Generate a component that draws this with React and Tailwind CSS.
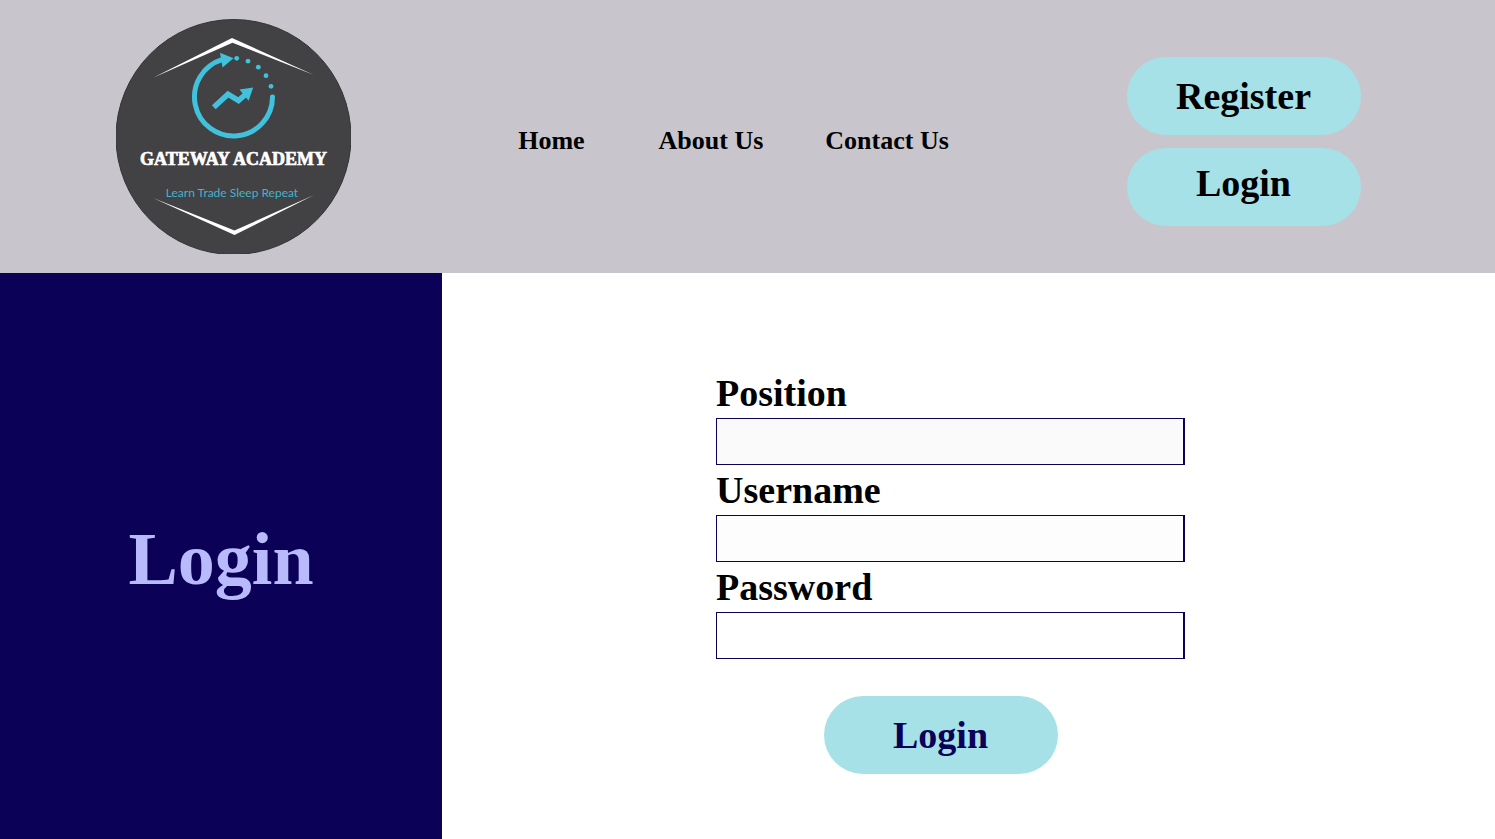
import React from "react";

function Logo() {
  return (
    <svg
      viewBox="0 0 235 235"
      role="img"
      aria-label="Gateway Academy"
      className="block h-[235px] w-[235px] shrink-0"
    >
      <circle cx="117.5" cy="118" r="117.5" fill="#424143" stroke="#343335" strokeWidth="1" />
      <path d="M37 58.7 L116 19 L198 56 L116.5 23.8 Z" fill="#fff" />
      <path d="M37 179 L118.5 216 L198 176 L118.5 211.5 Z" fill="#fff" />
      <path
        d="M106 40.7 A39 39 0 1 0 156.5 78"
        fill="none"
        stroke="#40c2dc"
        strokeWidth="5"
        strokeLinecap="round"
      />
      <path d="M104 33.7 L117.5 39.3 L106.5 48.4 Z" fill="#40c2dc" />
      <g fill="#40c2dc">
        <circle cx="120.7" cy="39.3" r="2.4" />
        <circle cx="132" cy="42.2" r="2.4" />
        <circle cx="142.3" cy="48.2" r="2.4" />
        <circle cx="150" cy="56.7" r="2.4" />
        <circle cx="155" cy="67.3" r="2.4" />
      </g>
      <path d="M97.8 88.3 L112 75.2 L122.5 81.5 L132 73.2" fill="none" stroke="#40c2dc" strokeWidth="5.5" />
      <path d="M123.5 70.6 L137.2 68.5 L132.6 81.7 Z" fill="#40c2dc" />
      <text
        x="117.5"
        y="146"
        textAnchor="middle"
        fill="#fff"
        stroke="#fff"
        strokeWidth="0.7"
        className="font-['Liberation_Serif',serif] text-[18px] font-bold"
      >
        GATEWAY ACADEMY
      </text>
      <text
        x="116"
        y="178"
        textAnchor="middle"
        fill="#40b5cd"
        className="font-['Lato',sans-serif] text-[12px]"
      >
        Learn Trade Sleep Repeat
      </text>
    </svg>
  );
}

const pill =
  "flex h-[78px] w-[234px] cursor-pointer items-center justify-center rounded-full bg-[#a6e1e8] text-[38px] leading-none font-bold";

function Field({ id, label, type, fill, autoComplete }) {
  return (
    <div className="flex flex-col">
      <label htmlFor={id} className="text-[38px] leading-[50px] font-bold">
        {label}
      </label>
      <input
        id={id}
        name={id}
        type={type}
        autoComplete={autoComplete}
        className={`h-[47px] w-full border border-r-2 border-[#0b0157] px-3 text-2xl outline-none ${fill}`}
      />
    </div>
  );
}

export default function App() {
  return (
    <div className="flex min-h-screen flex-col bg-white font-['Liberation_Serif',serif] text-black">
      <header className="grid grid-cols-[467fr_525fr_503fr] items-center bg-[#c8c6cc] py-[19px]">
        <div className="flex justify-center">
          <Logo />
        </div>
        <nav className="flex items-center justify-center gap-[62px] pt-2 pl-2 text-[26px] leading-8 font-bold whitespace-nowrap">
          <a href="#home" className="pr-3">Home</a>
          <a href="#about">About Us</a>
          <a href="#contact">Contact Us</a>
        </nav>
        <div className="flex flex-col items-center gap-[13px] pt-[10px]">
          <button type="button" className={pill}>Register</button>
          <button type="button" className={`${pill} pb-2`}>Login</button>
        </div>
      </header>
      <main className="flex flex-1">
        <aside className="flex w-[29.57%] items-center justify-center bg-[#0b0157] pt-[6px]">
          <h1 className="text-[74px] leading-none font-bold text-[#b9bafc]">Login</h1>
        </aside>
        <section className="flex flex-1 flex-col items-center pt-[95px] pr-9 pb-16">
          <form className="flex w-full max-w-[469px] flex-col" onSubmit={(e) => e.preventDefault()}>
            <Field id="position" label="Position" type="text" fill="bg-[#fafafa]" autoComplete="off" />
            <Field id="username" label="Username" type="text" fill="bg-[#fdfdfd]" autoComplete="username" />
            <Field id="password" label="Password" type="password" fill="bg-white" autoComplete="current-password" />
            <div className="flex justify-center pt-[37px] pr-5">
              <button type="submit" className={`${pill} text-[#0b0157]`}>Login</button>
            </div>
          </form>
        </section>
      </main>
    </div>
  );
}
